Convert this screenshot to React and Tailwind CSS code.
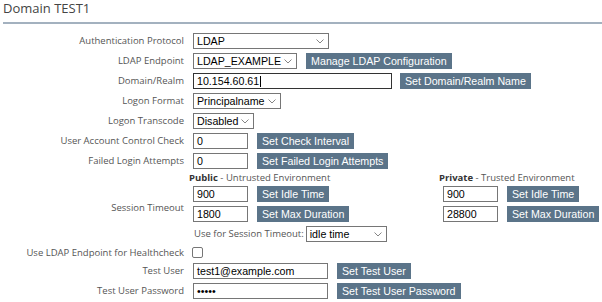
import React from "react";

const LABEL = "font-['Open_Sans',sans-serif] text-[9.5px] text-[#555] leading-none whitespace-nowrap";
const CTRL = "font-['Liberation_Sans',Arial,sans-serif] text-[10.67px] leading-none text-black";

function Chevron() {
  return (
    <svg width="8" height="5" viewBox="0 0 8 5" className="shrink-0">
      <polyline points="0.5,0.5 4,4 7.5,0.5" fill="none" stroke="#777" strokeWidth="0.9" />
    </svg>
  );
}

function Select({ value, w }) {
  return (
    <div
      className={`${CTRL} h-[16px] border border-[#767676] bg-white flex items-center justify-between pl-[3px] pr-[4px] gap-[3px] ${w || ""}`}
    >
      <span>{value}</span>
      <Chevron />
    </div>
  );
}

function Input({ value, w, focus }) {
  return (
    <div
      className={`${CTRL} h-[16px] border ${focus ? "border-[#333]" : "border-[#767676]"} bg-white flex items-center pl-[3px] ${w}`}
    >
      <span>{value}</span>
      {focus && <span className="w-[1px] h-[11px] bg-black ml-[1px]" />}
    </div>
  );
}

function Btn({ children, className = "" }) {
  return (
    <div
      className={`${CTRL} h-[16px] bg-[#5b7489] text-white flex items-center px-[5px] whitespace-nowrap ${className}`}
    >
      {children}
    </div>
  );
}

function Row({ label, children, h = "h-[16px]" }) {
  return (
    <>
      <div className={`${LABEL} flex items-center justify-end ${h}`}>{label}</div>
      <div className={`flex items-center ${h} gap-[9px]`}>{children}</div>
    </>
  );
}

function EnvColumn({ title, sub, idle, max, w }) {
  return (
    <div className={`flex flex-col gap-[4px] ${w || ""}`}>
      <div className={`${LABEL} h-[9px] flex items-center -ml-[4px] pt-[1px]`}>
        <span className="font-bold text-[#333]">{title}</span>&nbsp;- {sub}
      </div>
      <div className="flex items-center gap-[9px] h-[16px]">
        <Input value={idle} w="w-[55px]" />
        <Btn>Set Idle Time</Btn>
      </div>
      <div className="flex items-center gap-[9px] h-[16px]">
        <Input value={max} w="w-[55px]" />
        <Btn>Set Max Duration</Btn>
      </div>
    </div>
  );
}

export default function App() {
  return (
    <div className="w-[602px] h-[302px] bg-white overflow-hidden">
      <div className="pl-[3px]">
        <div className="font-['Open_Sans',sans-serif] text-[13px] text-[#444] leading-[16px] h-[22px]">
          Domain TEST1
        </div>
        <div className="h-[2px] bg-[#a3b1bf]" />
      </div>
      <div className="grid grid-cols-[184px_1fr] gap-x-[9px] gap-y-[4px] pt-[9px]">
        <Row label="Authentication Protocol">
          <Select value="LDAP" w="w-[136px]" />
        </Row>
        <Row label="LDAP Endpoint">
          <Select value="LDAP_EXAMPLE" />
          <Btn>Manage LDAP Configuration</Btn>
        </Row>
        <Row label="Domain/Realm">
          <Input value="10.154.60.61" w="w-[199px]" focus />
          <Btn className="-ml-[1px]">Set Domain/Realm Name</Btn>
        </Row>
        <Row label="Logon Format">
          <Select value="Principalname" />
        </Row>
        <Row label="Logon Transcode">
          <Select value="Disabled" />
        </Row>
        <Row label="User Account Control Check">
          <Input value="0" w="w-[55px]" />
          <Btn>Set Check Interval</Btn>
        </Row>
        <Row label="Failed Login Attempts">
          <Input value="0" w="w-[55px]" />
          <Btn>Set Failed Login Attempts</Btn>
        </Row>

        <div className={`${LABEL} flex items-center justify-end`}>Session Timeout</div>
        <div className="flex flex-col gap-[4px]">
          <div className="flex">
            <EnvColumn title="Public" sub="Untrusted Environment" idle="900" max="1800" w="w-[250px]" />
            <EnvColumn title="Private" sub="Trusted Environment" idle="900" max="28800" />
          </div>
          <div className="flex items-center h-[16px] gap-[2px] pl-[1px]">
            <span className={LABEL}>Use for Session Timeout:</span>
            <Select value="idle time" w="w-[81px]" />
          </div>
        </div>

        <Row label="Use LDAP Endpoint for Healthcheck" h="h-[13px]">
          <div className="w-[11px] h-[11px] border border-[#767676] rounded-[2px] bg-white -ml-[1px]" />
        </Row>
        <Row label="Test User">
          <Input value="test1@example.com" w="w-[135px]" />
          <Btn>Set Test User</Btn>
        </Row>
        <Row label="Test User Password">
          <Input value="•••••" w="w-[135px]" />
          <Btn>Set Test User Password</Btn>
        </Row>
      </div>
    </div>
  );
}
